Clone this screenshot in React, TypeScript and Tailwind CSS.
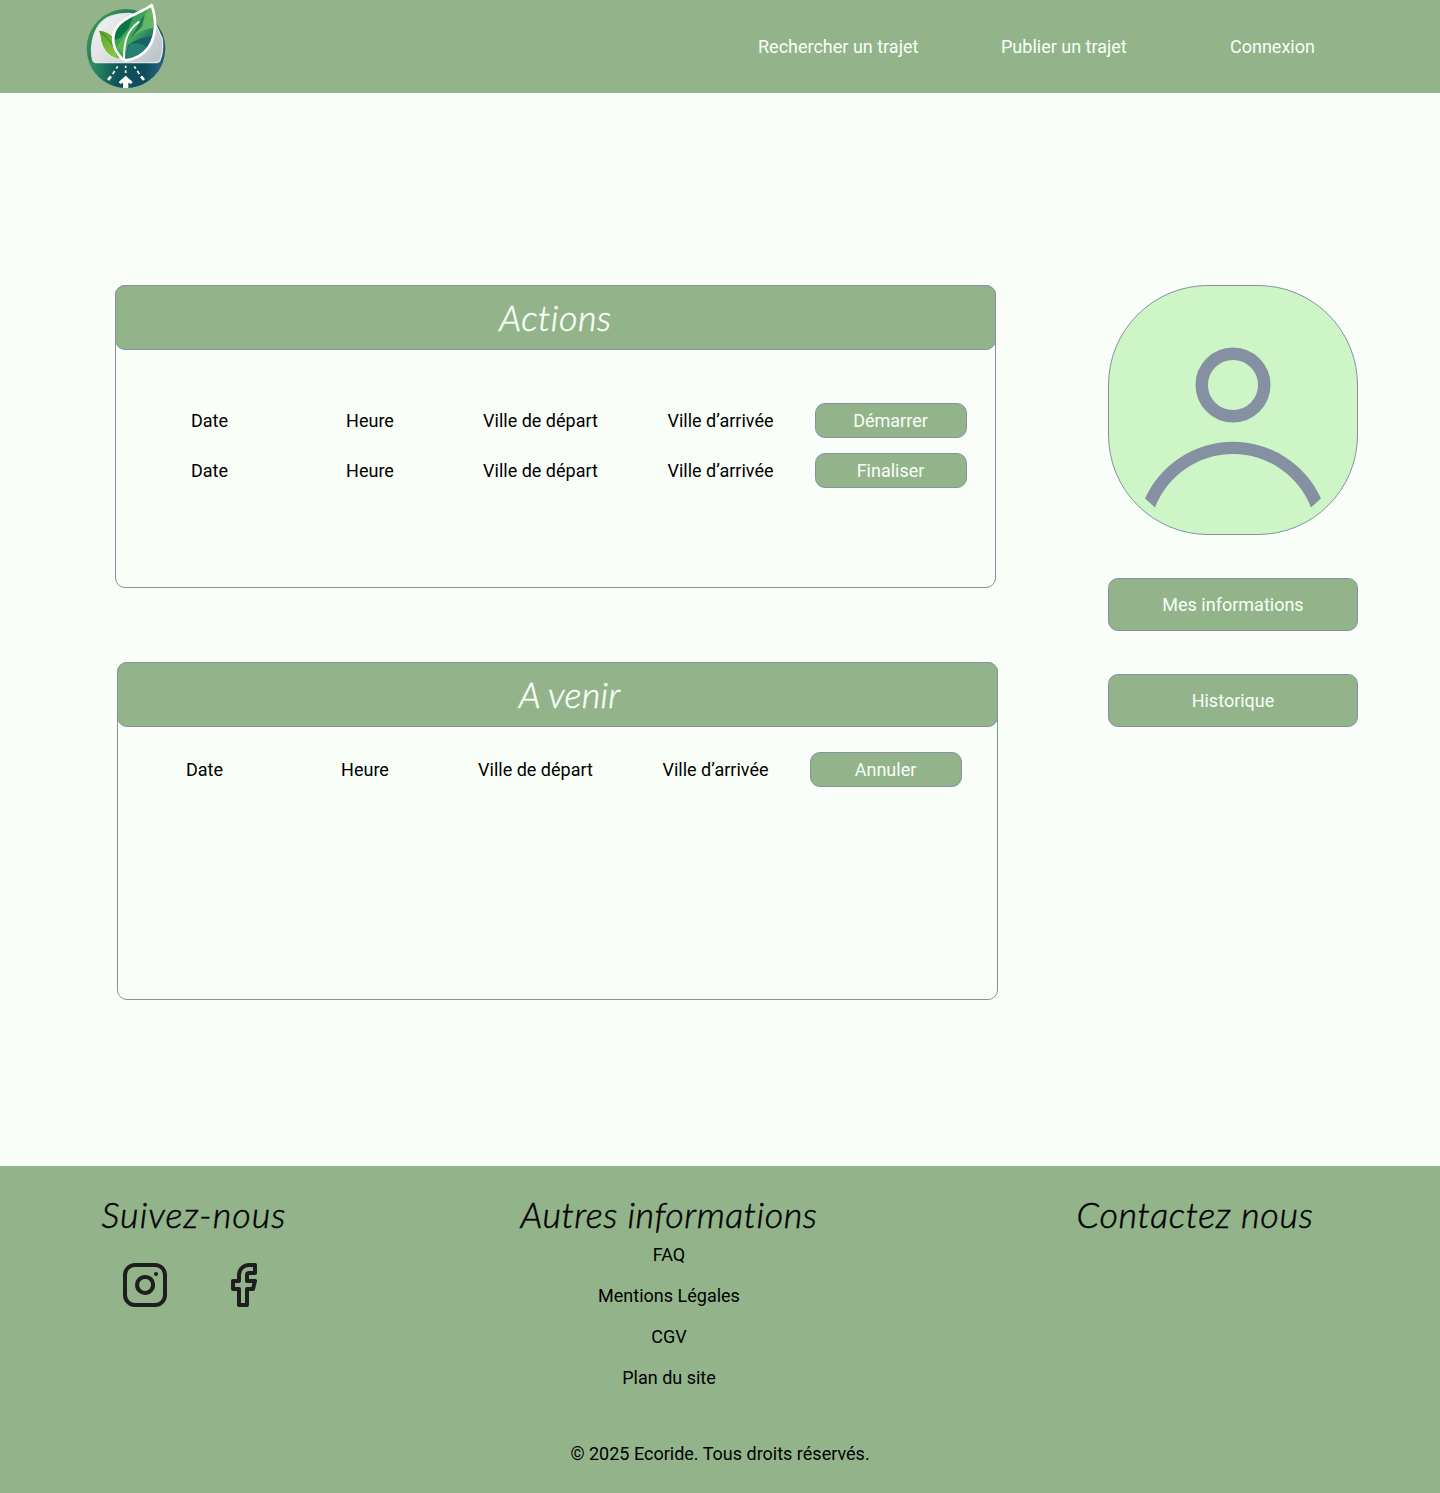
import React from "react";
import { Facebook, Instagram } from "lucide-react";

const TITLE = "font-['Lato'] font-light italic text-[36px] leading-[40px] whitespace-nowrap";

function Logo() {
  return (
    <svg className="-mt-px h-[94px] w-[92px]" viewBox="0 0 276 282" fill="none" role="img" aria-label="Ecoride">
      <defs>
        <linearGradient id="disc" x1="30" y1="60" x2="250" y2="230" gradientUnits="userSpaceOnUse">
          <stop offset="0" stopColor="#3f9a58" />
          <stop offset="0.5" stopColor="#17695f" />
          <stop offset="1" stopColor="#1f5877" />
        </linearGradient>
        <linearGradient id="road" x1="24" y1="200" x2="250" y2="230" gradientUnits="userSpaceOnUse">
          <stop offset="0" stopColor="#2f9a60" />
          <stop offset="0.4" stopColor="#0e5557" />
          <stop offset="0.75" stopColor="#0f4a5c" />
          <stop offset="1" stopColor="#2a6b86" />
        </linearGradient>
        <linearGradient id="body" x1="60" y1="60" x2="220" y2="190" gradientUnits="userSpaceOnUse">
          <stop offset="0" stopColor="#f0f1f3" />
          <stop offset="1" stopColor="#bfc4cb" />
        </linearGradient>
        <linearGradient id="leaf" x1="110" y1="70" x2="215" y2="150" gradientUnits="userSpaceOnUse">
          <stop offset="0" stopColor="#2b9b4e" />
          <stop offset="0.5" stopColor="#43a85a" />
          <stop offset="1" stopColor="#145c63" />
        </linearGradient>
        <linearGradient id="sprout" x1="60" y1="100" x2="110" y2="170" gradientUnits="userSpaceOnUse">
          <stop offset="0" stopColor="#5fa531" />
          <stop offset="1" stopColor="#8cc63f" />
        </linearGradient>
      </defs>
      <circle cx="138" cy="148" r="118" fill="url(#disc)" />
      <path d="M26 186H250A118 118 0 0 1 26 186Z" fill="url(#road)" />
      <path d="M38 183C30 150 36 108 57 78C76 52 104 44 148 43L220 60L247 120C250 150 246 170 240 184Q236 191 226 191H52Q41 191 38 183Z" fill="url(#body)" stroke="#dfe6e6" strokeWidth="4" />
      <path d="M113 181C79 170 65 145 61 116Q59 102 54 93C83 95 105 110 111 141Q115 160 122 179Z" fill="url(#sprout)" stroke="#eef5ea" strokeWidth="3" />
      <path d="M65 101Q96 125 114 174" stroke="#347b36" strokeWidth="3" />
      <path d="M126 179C96 150 91 107 114 80C139 49 183 43 215 18C229 59 231 108 206 145C188 170 163 181 137 184Z" fill="url(#leaf)" />
      <path d="M108 88Q126 61 161 50L145 88L121 116L98 126Q98 103 108 88Z" fill="#0c764b" />
      <path d="M161 94L213 21Q223 57 220 86Q190 89 161 112Z" fill="#65b565" />
      <path d="M151 119L184 60L195 46L186 82Z" fill="#197e54" />
      <path d="M144 138Q181 112 219 112Q210 143 186 162L137 178Z" fill="#16636a" />
      <path d="M147 137Q173 126 202 145L175 168L138 177Z" fill="#258270" />
      <path d="M110 145L137 105L130 163Z" fill="#58b74d" />
      <path d="M176 69C142 95 132 123 132 178" stroke="#f6fbf6" strokeWidth="6" strokeLinecap="round" />
      <path d="M126 179C96 150 91 107 114 80C139 49 183 43 215 18C229 59 231 108 206 145C188 170 163 181 137 184Z" stroke="#fff" strokeWidth="8" strokeLinejoin="round" />
      <path d="M113 202L109 209M104 216L98 225M137 200V207M137 214V222M163 202L167 209M172 216L178 225" stroke="#f5faf9" strokeWidth="5" />
      <path d="M93 232L84 243M183 232L192 243" stroke="#f5faf9" strokeWidth="8" />
      <path d="M137 230L158 249L153 255L145 251V267H129V251L121 255L116 249Z" fill="#fff" />
    </svg>
  );
}

function Avatar() {
  return (
    <div className="h-[250px] w-[250px] overflow-hidden rounded-[100px] border border-[#8591a3] bg-[#cef5c5]">
      <svg className="-m-px h-[250px] w-[250px] max-w-none" viewBox="0 0 250 250" fill="none">
        <circle cx="125" cy="100" r="31.25" stroke="#8591a3" strokeWidth="12.5" />
        <path d="M37 213.5A96.6 96.6 0 0 1 213 213.5L203 222.5A83.6 83.6 0 0 0 47 222.5Z" fill="#8591a3" />
      </svg>
    </div>
  );
}

function TripRow({ action }: { action: string }) {
  return (
    <div className="grid h-[50px] grid-cols-[159px_162px_179px_181px_159px] items-center text-center">
      <span className="pt-[2px]">Date</span>
      <span className="pt-[2px]">Heure</span>
      <span className="pt-[2px]">Ville de départ</span>
      <span className="pt-[2px]">Ville d’arrivée</span>
      <button className="mx-auto h-[35px] w-[152px] rounded-[10px] border border-[#8591a3] bg-[#93b48b] pt-px text-[#f9fff8]">
        {action}
      </button>
    </div>
  );
}

function SideButton({ children }: { children: React.ReactNode }) {
  return (
    <button className="h-[53px] w-[250px] rounded-[10px] border border-[#8591a3] bg-[#93b48b] text-[#f9fff8]">
      {children}
    </button>
  );
}

export default function App() {
  return (
    <div className="flex h-[1493px] w-[1440px] flex-col bg-[#f9fff8] font-['Roboto',sans-serif] text-[18px] leading-[22px] text-black">
      <header className="flex h-[93px] items-center bg-[#93b48b] pl-20 text-[#f9fff8]">
        <Logo />
        <nav className="ml-[586px] flex whitespace-nowrap">
          <a className="w-[160px]">Rechercher un trajet</a>
          <a className="ml-[83px] w-[125px]">Publier un trajet</a>
          <a className="ml-[104px]">Connexion</a>
        </nav>
      </header>

      <main className="flex h-[1073px] items-start pt-[192px] pl-[115px]">
        <div className="w-[883px]">
          <section className="h-[303px] w-[881px] rounded-[10px] border border-[#8591a3]">
            <div className="-mx-px -mt-px flex h-[65px] items-center justify-center rounded-[10px] border border-[#8591a3] bg-[#93b48b] pb-[2px] text-[#f9fff8]">
              <h2 className={`${TITLE} tracking-[0.5px] [-webkit-text-stroke:0.5px]`}>Actions</h2>
            </div>
            <div className="pt-[45px] pl-[14px]">
              <TripRow action="Démarrer" />
              <TripRow action="Finaliser" />
            </div>
          </section>

          <section className="mt-[74px] ml-[2px] h-[338px] w-[881px] rounded-[10px] border border-[#8591a3]">
            <div className="-mx-px -mt-px flex h-[65px] items-center justify-center rounded-[10px] border border-[#8591a3] bg-[#93b48b] pb-[2px] pl-6 text-[#f9fff8]">
              <h2 className={`${TITLE} tracking-[0.2px] [-webkit-text-stroke:0.5px]`}>A venir</h2>
            </div>
            <div className="pt-[17px] pl-[7px]">
              <TripRow action="Annuler" />
            </div>
          </section>
        </div>

        <aside className="ml-[110px] flex flex-col gap-[43px]">
          <Avatar />
          <SideButton>Mes informations</SideButton>
          <SideButton>Historique</SideButton>
        </aside>
      </main>

      <footer className="flex h-[327px] flex-col bg-[#93b48b] pt-[28px]">
        <div className="flex h-[249px]">
          <section className="ml-[94px] w-[200px]">
            <h2 className={`${TITLE} text-center tracking-[1px] [-webkit-text-stroke:0.5px]`}>Suivez-nous</h2>
            <div className="mt-[27px] ml-[27px] flex gap-[50px] text-[#1e1e1e]">
              <Instagram size={48} strokeWidth={2} />
              <Facebook size={48} strokeWidth={2} />
            </div>
          </section>
          <section className="ml-[215px] w-[320px] text-center">
            <h2 className={`${TITLE} tracking-[0.52px] [-webkit-text-stroke:0.5px]`}>Autres informations</h2>
            <ul className="mt-[10px] flex flex-col gap-[19px]">
              <li>FAQ</li>
              <li>Mentions Légales</li>
              <li>CGV</li>
              <li>Plan du site</li>
            </ul>
          </section>
          <section className="ml-[226px] w-[280px] text-center">
            <h2 className={`${TITLE} tracking-[0.65px] [-webkit-text-stroke:0.5px]`}>Contactez nous</h2>
          </section>
        </div>
        <p className="text-center">© 2025 Ecoride. Tous droits réservés.</p>
      </footer>
    </div>
  );
}
